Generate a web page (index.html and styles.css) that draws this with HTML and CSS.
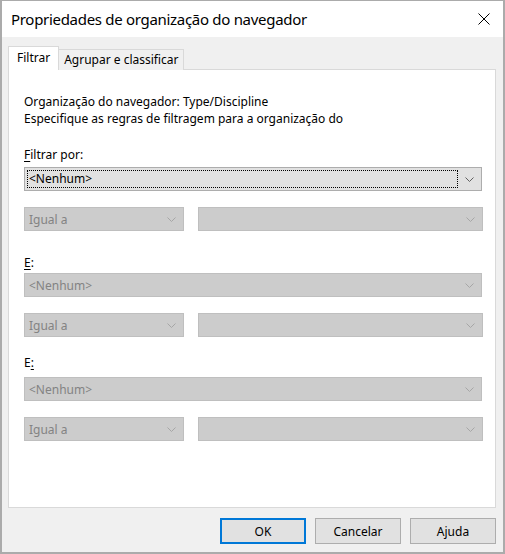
FILE: index.html
```html
<!DOCTYPE html>
<html lang="pt">
<head>
<meta charset="utf-8">
<title>Propriedades de organização do navegador</title>
<link rel="stylesheet" href="styles.css">
</head>
<body>
<div class="window">
  <div class="titlebar">
    <span class="title">Propriedades de organização do navegador</span>
    <svg class="close" width="12" height="12" viewBox="0 0 12 12"><path d="M0.5 0.5 L11.5 11.5 M11.5 0.5 L0.5 11.5" stroke="#000" stroke-width="1" fill="none"/></svg>
  </div>
  <div class="body">
    <div class="tabs">
      <div class="tab active">Filtrar</div>
      <div class="tab">Agrupar e classificar</div>
    </div>
    <div class="panel">
      <div class="desc">Organização do navegador: Type/Discipline<br>Especifique as regras de filtragem para a organização do</div>

      <div class="label l1"><u>F</u>iltrar por:</div>
      <div class="combo focus">
        <span class="focusrect">&lt;Nenhum&gt;</span>
        <svg class="chev" width="9" height="5" viewBox="0 0 9 5"><path d="M0.5 0.5 L4.5 4.5 L8.5 0.5" stroke="#606060" fill="none"/></svg>
      </div>
      <div class="row">
        <div class="combo dis small"><span class="val">Igual a</span><svg class="chev" width="9" height="5" viewBox="0 0 9 5"><path d="M0.5 0.5 L4.5 4.5 L8.5 0.5" stroke="#a6a6a6" fill="none"/></svg></div>
        <div class="combo dis wide"><span class="val"></span><svg class="chev" width="9" height="5" viewBox="0 0 9 5"><path d="M0.5 0.5 L4.5 4.5 L8.5 0.5" stroke="#a6a6a6" fill="none"/></svg></div>
      </div>

      <div class="label l2"><u>E</u>:</div>
      <div class="combo dis"><span class="val">&lt;Nenhum&gt;</span><svg class="chev" width="9" height="5" viewBox="0 0 9 5"><path d="M0.5 0.5 L4.5 4.5 L8.5 0.5" stroke="#a6a6a6" fill="none"/></svg></div>
      <div class="row">
        <div class="combo dis small"><span class="val">Igual a</span><svg class="chev" width="9" height="5" viewBox="0 0 9 5"><path d="M0.5 0.5 L4.5 4.5 L8.5 0.5" stroke="#a6a6a6" fill="none"/></svg></div>
        <div class="combo dis wide"><span class="val"></span><svg class="chev" width="9" height="5" viewBox="0 0 9 5"><path d="M0.5 0.5 L4.5 4.5 L8.5 0.5" stroke="#a6a6a6" fill="none"/></svg></div>
      </div>

      <div class="label l3">E<u>:</u></div>
      <div class="combo dis"><span class="val">&lt;Nenhum&gt;</span><svg class="chev" width="9" height="5" viewBox="0 0 9 5"><path d="M0.5 0.5 L4.5 4.5 L8.5 0.5" stroke="#a6a6a6" fill="none"/></svg></div>
      <div class="row">
        <div class="combo dis small"><span class="val">Igual a</span><svg class="chev" width="9" height="5" viewBox="0 0 9 5"><path d="M0.5 0.5 L4.5 4.5 L8.5 0.5" stroke="#a6a6a6" fill="none"/></svg></div>
        <div class="combo dis wide"><span class="val"></span><svg class="chev" width="9" height="5" viewBox="0 0 9 5"><path d="M0.5 0.5 L4.5 4.5 L8.5 0.5" stroke="#a6a6a6" fill="none"/></svg></div>
      </div>
    </div>
    <div class="buttons">
      <div class="btn default">OK</div>
      <div class="btn">Cancelar</div>
      <div class="btn">Ajuda</div>
    </div>
  </div>
</div>
</body>
</html>
```

FILE: styles.css
```css
* { box-sizing: border-box; }
html, body { margin: 0; padding: 0; background: #ffffff; }
body {
  font-family: "Noto Sans", "Open Sans", sans-serif;
  font-size: 12px;
  color: #000;
}
.window {
  width: 505px;
  height: 554px;
  border-style: solid;
  border-color: #ababab;
  border-width: 1px 2px 2px 2px;
  display: flex;
  flex-direction: column;
  background: #f0f0f0;
}
.titlebar {
  height: 36px;
  background: #ffffff;
  display: flex;
  align-items: center;
  justify-content: space-between;
  padding: 0 13px 0 9px;
  flex: none;
}
.title {
  font-size: 15px;
  color: #000;
  letter-spacing: -0.3px;
}
.close { display: block; }
.body {
  flex: 1;
  display: flex;
  flex-direction: column;
  padding: 9px 7px 0 6px;
}
.tabs {
  display: flex;
  align-items: flex-end;
  height: 24px;
  position: relative;
  z-index: 1;
  margin-bottom: -1px;
  flex: none;
}
.tab {
  border: 1px solid #d9d9d9;
  border-bottom: none;
  background: #f0f0f0;
  height: 21px;
  padding: 0 4px 0 5px;
  line-height: 20px;
}
.tab.active {
  background: #ffffff;
  height: 24px;
  padding: 0 8px 0 8px;
  line-height: 22px;
}
.tab.active + .tab { border-left: none; }
.panel {
  height: 439px;
  flex: none;
  background: #ffffff;
  border: 1px solid #d9d9d9;
  padding: 23px 12px 0 15px;
  display: flex;
  flex-direction: column;
}
.desc {
  line-height: 17px;
  flex: none;
}
.label {
  line-height: 17px;
  height: 17px;
  flex: none;
}
.label u { text-decoration-thickness: 1px; text-underline-offset: 2px; }
.l1 { margin-top: 19px; margin-bottom: 4px; }
.l2 { margin-top: 23px; margin-bottom: 2px; }
.l3 { margin-top: 17px; margin-bottom: 6px; }
.combo {
  height: 24px;
  border: 1px solid #adadad;
  background: #e1e1e1;
  display: flex;
  align-items: center;
  justify-content: space-between;
  padding: 0 7px 0 4px;
  width: 458px;
  flex: none;
}
.combo.focus { padding-left: 2px; }
.focusrect {
  flex: none;
  width: 431px;
  height: 18px;
  border: 1px dotted #000;
  line-height: 16px;
  padding-left: 1px;
}
.combo.dis {
  background: #cccccc;
  border-color: #bfbfbf;
  color: #838383;
}
.combo.small { width: 160px; }
.combo.wide { width: 285px; }
.chev { display: block; flex: none; }
.row {
  display: flex;
  justify-content: space-between;
  width: 459px;
  margin-top: 16px;
  flex: none;
}
.buttons {
  display: flex;
  justify-content: flex-end;
  gap: 9px;
  margin-top: 10px;
  flex: none;
}
.btn {
  width: 86px;
  height: 26px;
  border: 1px solid #adadad;
  background: #e1e1e1;
  display: flex;
  align-items: center;
  justify-content: center;
}
.btn.default {
  border: 2px solid #0078d7;
}
```
